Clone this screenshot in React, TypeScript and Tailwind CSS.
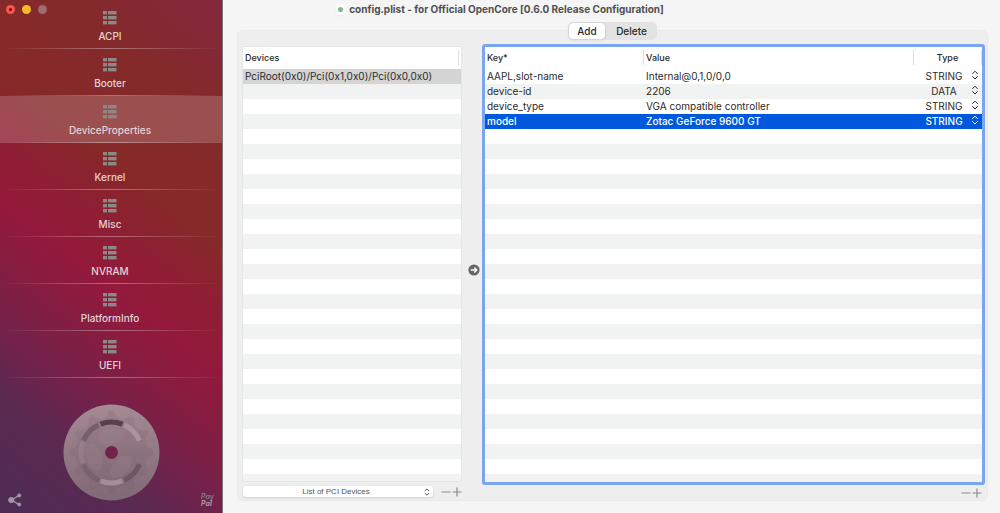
import { useState } from 'react'
import clsx from 'clsx'

type Entry = { key: string; value: string; type: string }

const sections = ['ACPI', 'Booter', 'DeviceProperties', 'Kernel', 'Misc', 'NVRAM', 'PlatformInfo', 'UEFI']

const devices = ['PciRoot(0x0)/Pci(0x1,0x0)/Pci(0x0,0x0)']

const entries: Entry[] = [
  { key: 'AAPL,slot-name', value: 'Internal@0,1,0/0,0', type: 'STRING' },
  { key: 'device-id', value: '2206', type: 'DATA' },
  { key: 'device_type', value: 'VGA compatible controller', type: 'STRING' },
  { key: 'model', value: 'Zotac GeForce 9600 GT', type: 'STRING' },
]

// alternating 15px rows, starting right under the 22px table header
const stripes =
  'bg-[repeating-linear-gradient(to_bottom,#ffffff_0px,#ffffff_15px,#f1f3f2_15px,#f1f3f2_30px)] bg-[position:0_22px]'

function ListIcon() {
  return (
    <svg width="14" height="14" viewBox="0 0 14 14" fill="#8d8886" aria-hidden="true">
      {[0, 5, 10].map((y) => (
        <g key={y}>
          <rect x="0" y={y} width="4" height="3.4" />
          <rect x="5" y={y} width="8.5" height="3.4" />
        </g>
      ))}
    </svg>
  )
}

function UpDown({ className }: { className?: string }) {
  return (
    <svg width="8" height="10" viewBox="0 0 8 10" fill="none" stroke="currentColor" strokeWidth="1" strokeLinecap="round" strokeLinejoin="round" className={className} aria-hidden="true">
      <path d="M1.6 3.6 4 1.2l2.4 2.4M1.6 6.6 4 9l2.4-2.4" />
    </svg>
  )
}

function Disc() {
  // twelve soft teeth around the inner plate
  const teeth = Array.from({ length: 12 }, (_, i) => i * 30)
  const arc = 'M-12.1 -31 A33.3 33.3 0 0 1 12.1 -31 L10.2 -26.2 A28 28 0 0 0 -10.2 -26.2 Z'
  const arcs = [
    { angle: 0, fill: '#57404b', opacity: 1 },
    { angle: 46, fill: '#ab929c', opacity: 1 },
    { angle: 134, fill: '#6e5664', opacity: 1 },
    { angle: 180, fill: '#a58c98', opacity: 1 },
    { angle: 226, fill: '#6e5664', opacity: 0.5 },
    { angle: 270, fill: '#a58c98', opacity: 0.4 },
    { angle: 314, fill: '#755f6a', opacity: 1 },
  ]
  return (
    <svg width="97" height="97" viewBox="-49 -49 98 98" aria-hidden="true">
      <defs>
        <linearGradient id="plate" x1="0" y1="0" x2="0" y2="1">
          <stop offset="0" stopColor="#a68b95" />
          <stop offset="0.5" stopColor="#927882" />
          <stop offset="1" stopColor="#806a77" />
        </linearGradient>
      </defs>
      <circle r="48.5" fill="url(#plate)" />
      <g fill="#6c5663" opacity="0.15">
        <circle r="35" />
        {teeth.map((a) => (
          <path key={a} d="M-10 -32 L-8 -35 Q-4 -36 -3 -42 L3 -42 Q4 -36 8 -35 L10 -32 Z" transform={`rotate(${a})`} />
        ))}
      </g>
      <g fill="#a58c98" fillOpacity="0.16">
        <ellipse cx="3" cy="-16" rx="14" ry="8" transform="rotate(-10)" />
        <ellipse cx="3" cy="-17" rx="14" ry="8" transform="rotate(135)" />
        <ellipse cx="0" cy="-18" rx="14" ry="8" transform="rotate(255)" />
      </g>
      {arcs.map((a) => (
        <path key={a.angle} d={arc} fill={a.fill} fillOpacity={a.opacity} transform={`rotate(${a.angle})`} />
      ))}
      <circle r="6.5" fill="#74224a" />
    </svg>
  )
}

function AddRemove({ label }: { label: string }) {
  return (
    <div className="flex items-center gap-px text-[#8a8a8a]">
      <button type="button" aria-label={`Remove ${label}`}>
        <svg width="10" height="10" viewBox="0 0 10 10" stroke="#b0b0b0" strokeWidth="1.6">
          <path d="M.5 5h9" />
        </svg>
      </button>
      <button type="button" aria-label={`Add ${label}`}>
        <svg width="10" height="10" viewBox="0 0 10 10" stroke="currentColor" strokeWidth="1.2">
          <path d="M.5 5h9M5 .5v9" />
        </svg>
      </button>
    </div>
  )
}

function Sidebar({ current, onSelect }: { current: string; onSelect: (s: string) => void }) {
  return (
    <aside className="flex w-[223px] shrink-0 flex-col border-r border-[#7b7377] bg-[linear-gradient(218deg,#84283f_0%,#842a2a_18%,#862929_36%,#8e1f33_45%,#94193b_54%,#881d40_62%,#72224b_74%,#5c2850_82%,#4e2c54_98%)] pt-[2px]">
      <nav>
        {sections.map((name) => (
          <button
            key={name}
            type="button"
            onClick={() => onSelect(name)}
            className={clsx('block w-full text-[#e3d3d5]', name === current && 'bg-white/18')}
          >
            <span className="flex h-[46px] flex-col items-center pt-[9px] pr-[2px] text-[10px] leading-4 font-medium">
              <ListIcon />
              <span className="mt-[3px]">{name}</span>
            </span>
            <span className="block h-px bg-linear-to-r from-transparent via-white/35 to-transparent" />
          </button>
        ))}
      </nav>
      <div className="flex flex-1 items-end justify-between px-2 pb-[6px]">
        <button type="button" aria-label="Share">
          <svg width="14" height="14" viewBox="0 0 14 14" fill="#a39aa1" stroke="#a39aa1">
            <path d="M11 2.500 3.500 7l7.500 4.500" fill="none" strokeWidth="1.400" />
            <circle cx="3.300" cy="7" r="2.600" />
            <circle cx="11.200" cy="2.400" r="1.500" />
            <circle cx="11.200" cy="11.500" r="1.500" />
          </svg>
        </button>
        <div className="pb-[6px]">
          <Disc />
        </div>
        <a href="#donate" className="text-[7px] leading-[7px] font-bold text-[#b09aa6] italic">
          <span className="block text-[#87717e]">Pay</span>
          <span className="block">Pal</span>
        </a>
      </div>
    </aside>
  )
}

export default function App() {
  const [section, setSection] = useState('DeviceProperties')
  const [tab, setTab] = useState('Add')
  const [selected, setSelected] = useState(3)

  return (
    <div className="relative flex min-h-screen bg-[#f5f5f5] font-[Inter,'Liberation_Sans',sans-serif] text-[#2a2a2a]">
      {/* title bar floats over the sidebar */}
      <header className="pointer-events-none absolute inset-x-0 top-0 flex h-[19px] items-center justify-center">
        <div className="absolute left-[6px] flex gap-[7px]">
          <span className="flex size-[9px] items-center justify-center rounded-full bg-[#fb5450]">
            <span className="size-[3px] rounded-full bg-[#6b0d0c]" />
          </span>
          <span className="size-[9px] rounded-full bg-[#fcb827]" />
          <span className="size-[9px] rounded-full bg-[#9e6b70]" />
        </div>
        <span className="mr-1 flex h-[11px] w-[9px] items-center justify-center rounded-xs bg-white shadow-xs">
          <span className="size-[5px] rounded-full bg-[#7fb98a]" />
        </span>
        <h1 className="text-[10px] font-bold text-[#505050]">config.plist - for Official OpenCore [0.6.0 Release Configuration]</h1>
      </header>

      <Sidebar current={section} onSelect={setSection} />

      <main className="flex min-w-0 flex-1 flex-col pt-[30px] pr-3 pb-3 pl-[14px]">
        <div className="flex flex-1 flex-col rounded-md border border-[#e9e9e9] bg-[#eeeeee] px-1">
          <div className="-mt-[9px] flex h-[18px] self-center rounded-[5px] bg-[#e3e3e3] text-[10px] leading-4 font-medium">
            {['Add', 'Delete'].map((t) => (
              <button
                key={t}
                type="button"
                onClick={() => setTab(t)}
                className={clsx('rounded-[5px]', t === 'Add' ? 'w-[38px]' : 'w-[51px]', t === tab && 'border border-[#d5d5d5] bg-white shadow-xs')}
              >
                {t}
              </button>
            ))}
          </div>

          <div className="flex flex-1">
            <section className="flex w-[220px] shrink-0 flex-col pt-[6px]">
              <div className={clsx('flex-1 border border-[#e6e6e6]', stripes)}>
                <table className="w-full table-fixed text-left text-[10px] leading-[15px]">
                  <thead>
                    <tr className="h-[22px] bg-white text-[9px]">
                      <th className="px-[2px] pb-[2px] font-medium">
                        <span className="block border-r border-[#dddddd]">Devices</span>
                      </th>
                    </tr>
                  </thead>
                  <tbody>
                    {devices.map((d) => (
                      <tr key={d} className="h-[15px] bg-[#d4d4d4]">
                        <td className="truncate px-[2px]">{d}</td>
                      </tr>
                    ))}
                  </tbody>
                </table>
              </div>
              <div className="flex h-[18px] items-center justify-between pt-px pl-px">
                <div className="relative flex w-[190px] items-center">
                  <select aria-label="List of PCI Devices" className="h-[11px] w-full appearance-none rounded-[3px] bg-white pr-1 text-center font-['Liberation_Sans',sans-serif] text-[8px] leading-[11px] text-[#555555] shadow-sm [text-align-last:center]">
                    <option>List of PCI Devices</option>
                  </select>
                  <UpDown className="pointer-events-none absolute right-[2px] h-2" />
                </div>
                <AddRemove label="device" />
              </div>
            </section>

            <div className="flex w-[23px] shrink-0 items-center justify-center">
              <button type="button" aria-label="Copy to properties">
                <svg width="12" height="12" viewBox="0 0 12 12">
                  <circle cx="6" cy="6" r="5.600" fill="#666666" />
                  <path d="M2.800 6h5.800M6.300 3.500 8.800 6 6.300 8.500" fill="none" stroke="#ffffff" strokeWidth="1.400" />
                </svg>
              </button>
            </div>

            <section className="flex min-w-0 flex-1 flex-col pt-[7px] pr-px">
              <div className={clsx('flex-1 rounded-[1px] ring-3 ring-[#7aa5f0]', stripes)}>
                <table className="w-full table-fixed text-left text-[10px] leading-[15px]">
                  <colgroup>
                    <col className="w-[32%]" />
                    <col />
                    <col className="w-[68px]" />
                  </colgroup>
                  <thead>
                    <tr className="h-[22px] bg-white text-[9px]">
                      <th className="pb-[2px] pl-[2px] font-medium">
                        <span className="block border-r border-[#dddddd]">Key*</span>
                      </th>
                      <th className="pb-[2px] pl-[2px] font-medium">
                        <span className="block border-r border-[#dddddd]">Value</span>
                      </th>
                      <th className="pb-[2px] text-center font-medium">
                        <span className="block border-r border-[#dddddd]">Type</span>
                      </th>
                    </tr>
                  </thead>
                  <tbody>
                    {entries.map((e, i) => (
                      <tr key={e.key} onClick={() => setSelected(i)} className={clsx('h-[15px]', i === selected && 'bg-[#0058dc] font-medium text-white')}>
                        <td className="truncate pl-[2px]">{e.key}</td>
                        <td className="truncate pl-[2px]">{e.value}</td>
                        <td>
                          <div className="relative flex items-center">
                            <select aria-label={`Type of ${e.key}`} defaultValue={e.type} className="h-[15px] w-full appearance-none pr-2 text-center [text-align-last:center]">
                              <option>STRING</option>
                              <option>DATA</option>
                            </select>
                            <UpDown className="pointer-events-none absolute top-px right-[3px]" />
                          </div>
                        </td>
                      </tr>
                    ))}
                  </tbody>
                </table>
              </div>
              <div className="flex h-[18px] items-center justify-end pt-[3px]">
                <AddRemove label="property" />
              </div>
            </section>
          </div>
        </div>
      </main>
    </div>
  )
}
